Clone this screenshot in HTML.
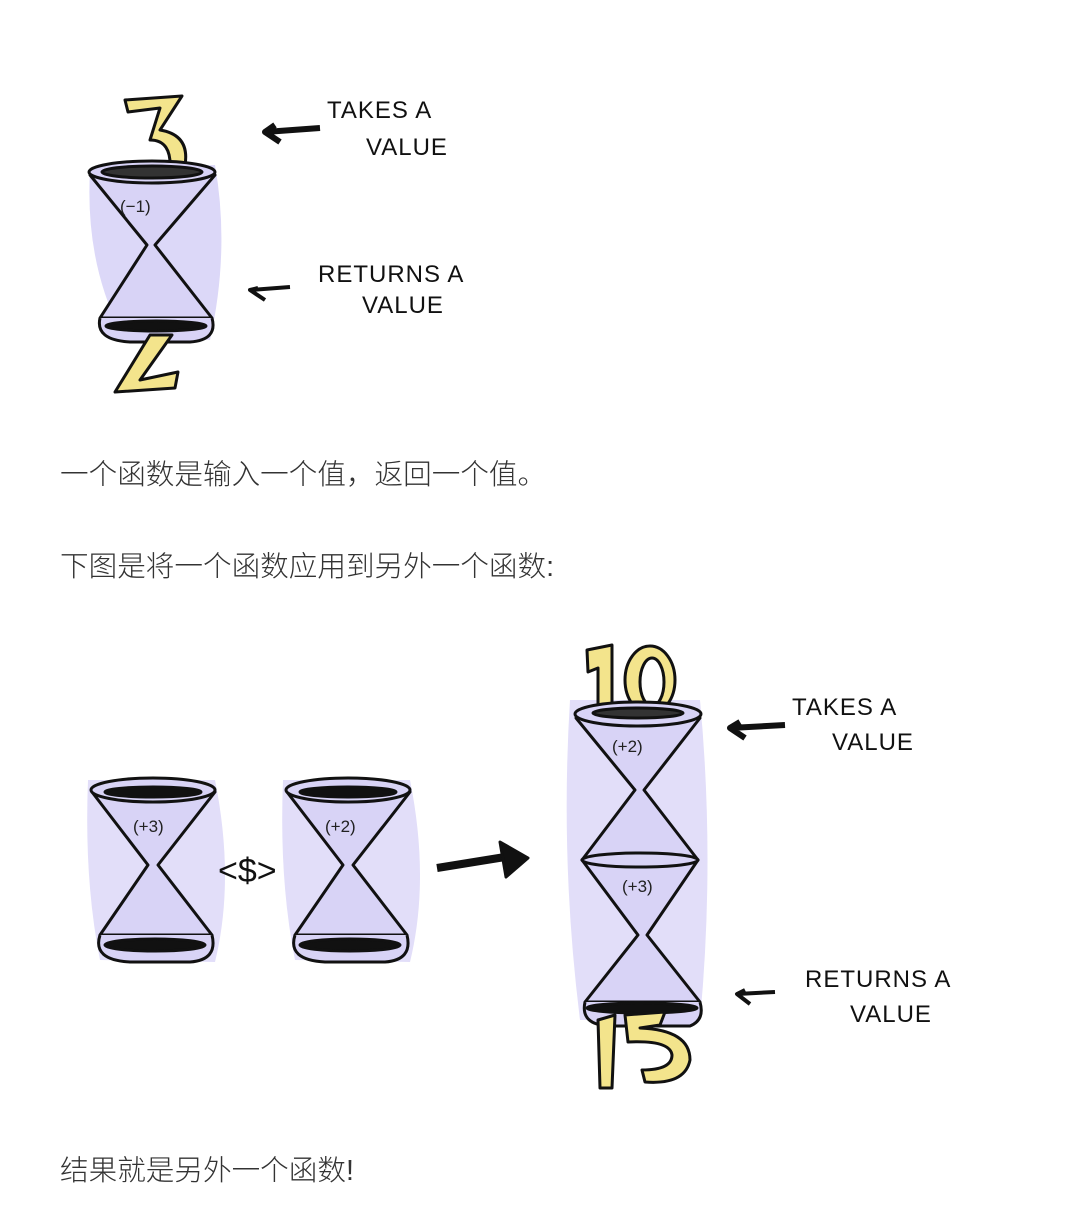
<!DOCTYPE html>
<html><head><meta charset="utf-8"><style>
html,body{margin:0;padding:0;background:#fff;}
body{width:1065px;height:1225px;position:relative;overflow:hidden;font-family:"Liberation Sans","Noto Sans CJK SC",sans-serif;}
.t{position:absolute;left:60px;font-size:28.6px;color:#333;font-weight:300;white-space:nowrap;line-height:1;}
svg{position:absolute;left:0;top:0;}
.lbl{font-family:"Liberation Sans",sans-serif;font-size:24px;fill:#111;letter-spacing:1px;}
.sm{font-family:"Liberation Sans",sans-serif;font-size:17px;fill:#222;}
</style></head><body>
<svg width="1065" height="1225" viewBox="0 0 1065 1225">
<g stroke="#111" stroke-width="3" stroke-linejoin="round">
<path d="M90 170 Q85 260 120 330 L210 340 Q230 250 215 165 Z" fill="#dcd8f8" stroke="none"/>
<path d="M125 100 L182 96 L160 130 Q190 135 185 165 L170 170 Q172 140 150 140 L160 108 L128 112 Z" fill="#f3e48c"/>
<path d="M90 175 L147 245 L100 318 L212 318 L155 245 L215 175 Z" fill="#d8d3f6"/>
<ellipse cx="152" cy="172" rx="63" ry="11" fill="#d8d3f6"/>
<ellipse cx="152" cy="172" rx="50" ry="6" fill="#333"/>
<path d="M100 318 Q95 340 130 342 L190 342 Q218 340 212 318" fill="#d8d3f6"/>
<ellipse cx="156" cy="326" rx="50" ry="5" fill="#111"/>
<path d="M150 335 L172 335 L140 380 L178 372 L175 388 L115 392 Z" fill="#f3e48c"/>
<path d="M275 125 L265 132 L280 142 M265 132 L320 128" fill="none" stroke-width="6"/>
<path d="M258 288 L250 290 L265 300 M250 290 L290 287" fill="none" stroke-width="4"/>
<path d="M88 780 Q84 880 100 960 L215 962 Q235 880 215 780 Z" fill="#e2def9" stroke="none"/>
<path d="M283 780 Q279 880 295 960 L410 962 Q430 880 410 780 Z" fill="#e2def9" stroke="none"/>
<path d="M570 700 Q560 860 580 1020 L700 1020 Q715 860 700 700 Z" fill="#e2def9" stroke="none"/>
<path d="M92 792 L148 865 L100 935 L212 935 L158 865 L215 792 Z" fill="#d8d3f6"/>
<ellipse cx="153" cy="790" rx="62" ry="12" fill="#d8d3f6"/>
<ellipse cx="153" cy="792" rx="48" ry="5" fill="#111"/>
<path d="M100 935 Q92 960 130 962 L190 962 Q218 960 212 935" fill="#d8d3f6"/>
<ellipse cx="155" cy="945" rx="50" ry="6" fill="#111"/>
<path d="M287 792 L343 865 L295 935 L407 935 L353 865 L410 792 Z" fill="#d8d3f6"/>
<ellipse cx="348" cy="790" rx="62" ry="12" fill="#d8d3f6"/>
<ellipse cx="348" cy="792" rx="48" ry="5" fill="#111"/>
<path d="M295 935 Q287 960 325 962 L385 962 Q413 960 407 935" fill="#d8d3f6"/>
<ellipse cx="350" cy="945" rx="50" ry="6" fill="#111"/>
<path d="M437 868 L505 857" fill="none" stroke-width="8"/>
<path d="M500 842 L528 858 L506 877 Z" fill="#111"/>
<path d="M587 650 L612 645 L612 712 L598 712 L598 668 L588 672 Z" fill="#f3e48c"/>
<ellipse cx="650" cy="680" rx="25" ry="34" fill="#f3e48c"/>
<ellipse cx="652" cy="682" rx="12" ry="24" fill="#fff"/>
<path d="M576 718 L635 790 L582 860 L698 860 L644 790 L700 718 Z" fill="#d8d3f6"/>
<ellipse cx="638" cy="714" rx="63" ry="12" fill="#d8d3f6"/>
<ellipse cx="638" cy="713" rx="45" ry="5" fill="#333"/>
<path d="M582 860 L638 935 L585 1002 L700 1002 L647 935 L698 860 Z" fill="#d8d3f6"/>
<ellipse cx="640" cy="860" rx="58" ry="7" fill="#d8d3f6"/>
<path d="M585 1002 Q580 1025 610 1026 L690 1026 Q705 1020 700 1002" fill="#d8d3f6"/>
<ellipse cx="642" cy="1008" rx="55" ry="5" fill="#111"/>
<path d="M598 1020 L615 1015 L612 1088 L600 1088 Z" fill="#f3e48c"/>
<path d="M625 1015 L665 1012 L660 1025 L640 1028 Q690 1030 690 1060 Q685 1085 645 1082 L642 1070 Q672 1070 672 1055 Q670 1040 628 1042 Z" fill="#f3e48c"/>
<path d="M740 722 L730 728 L745 738 M730 728 L785 725" fill="none" stroke-width="6"/>
<path d="M745 990 L737 994 L750 1004 M737 994 L775 992" fill="none" stroke-width="4"/>
</g>
<g class="sm">
<text x="120" y="212">(−1)</text>
<text x="133" y="832">(+3)</text>
<text x="325" y="832">(+2)</text>
<text x="612" y="752">(+2)</text>
<text x="622" y="892">(+3)</text>
</g>
<text x="218" y="882" font-family="Liberation Sans" font-size="34" fill="#111">&lt;$&gt;</text>
<g class="lbl">
<text x="327" y="118">TAKES  A</text>
<text x="366" y="155">VALUE</text>
<text x="318" y="282">RETURNS A</text>
<text x="362" y="313">VALUE</text>
<text x="792" y="715">TAKES  A</text>
<text x="832" y="750">VALUE</text>
<text x="805" y="987">RETURNS A</text>
<text x="850" y="1022">VALUE</text>
</g>
</svg>
<div class="t" style="top:461px">一个函数是输入一个值，返回一个值。</div>
<div class="t" style="top:553px">下图是将一个函数应用到另外一个函数:</div>
<div class="t" style="top:1157px">结果就是另外一个函数!</div>
</body></html>
